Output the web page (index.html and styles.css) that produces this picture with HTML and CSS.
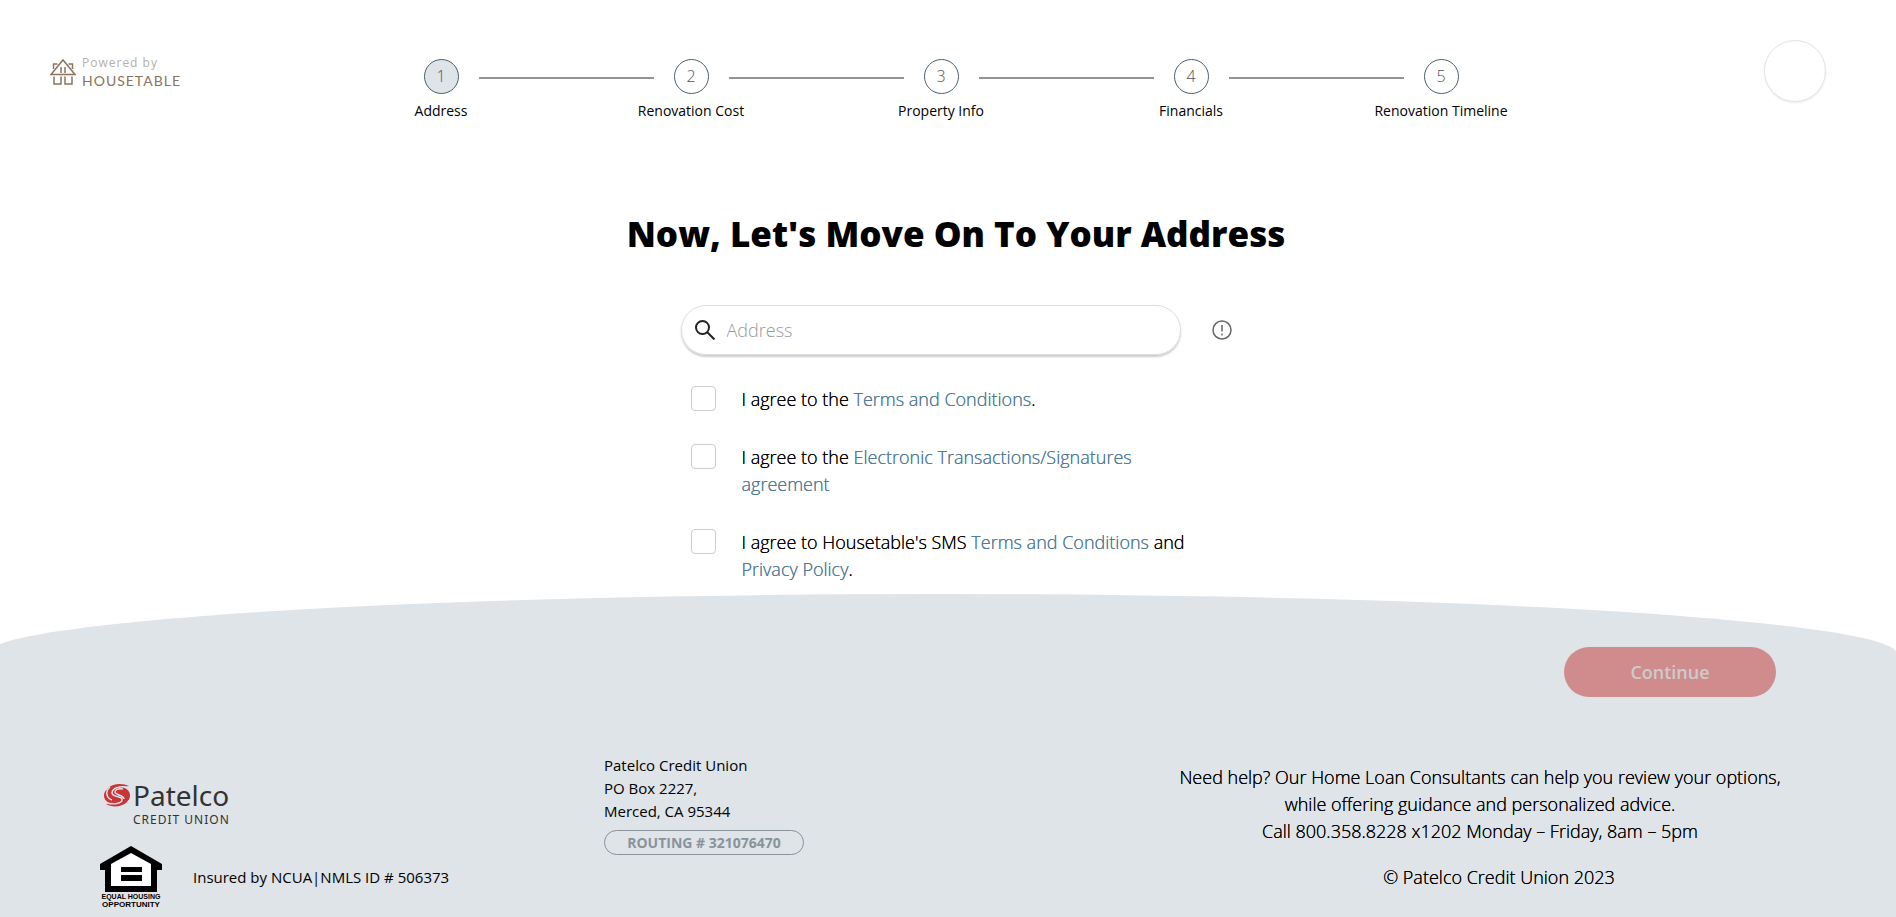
FILE: index.html
```
<!DOCTYPE html>
<html lang="en">
<head>
    <meta charset="UTF-8">
    <meta name="viewport" content="width=device-width, initial-scale=1.0">
    <title>Address</title>
    <link rel="stylesheet" href="styles.css">
</head>
<body>
    <!-- Header -->
    <header class="header">
        <a href="#" class="brand" aria-label="Powered by Housetable">
            <svg class="brand-icon" viewBox="0 0 26 28" fill="none" stroke="#8a735f" stroke-width="1.5">
                <path d="M1 16.500 13 2 25 16.500Z"/>
                <path d="M3.500 11V6h4M22.500 11V6h-4M11 9v6M15 9v6"/>
                <path d="M4 18.500V26h7v-7.500M15 18.500V26h7v-7.500"/>
            </svg>
            <span class="brand-text">
                <span class="brand-powered">Powered by</span>
                <span class="brand-name">HOUSETABLE</span>
            </span>
        </a>

        <ol class="steps">
            <li class="step active"><span class="step-number">1</span><span class="step-label">Address</span></li>
            <li class="step"><span class="step-number">2</span><span class="step-label">Renovation Cost</span></li>
            <li class="step"><span class="step-number">3</span><span class="step-label">Property Info</span></li>
            <li class="step"><span class="step-number">4</span><span class="step-label">Financials</span></li>
            <li class="step"><span class="step-number">5</span><span class="step-label">Renovation Timeline</span></li>
        </ol>

        <button type="button" class="profile" aria-label="Profile"></button>
    </header>

    <!-- Address form -->
    <main class="main">
        <h1>Now, Let's Move On To Your Address</h1>
        <form class="address-form" id="address-form">
            <div class="search-row">
                <label class="search">
                    <svg viewBox="0 0 20 20" fill="none" stroke="#222" stroke-width="2">
                        <circle cx="7.500" cy="7.500" r="6.500"/>
                        <path d="m12 12 7.500 7.500"/>
                    </svg>
                    <input type="text" name="address" placeholder="Address" aria-label="Address">
                </label>
                <button type="button" class="info" aria-label="Address help">
                    <svg viewBox="0 0 20 20" fill="none" stroke="#666" stroke-width="1.500">
                        <circle cx="10" cy="10" r="9"/>
                        <path d="M10 5v6.500M10 13.500v2"/>
                    </svg>
                </button>
            </div>

            <div class="agree">
                <input type="checkbox" id="terms">
                <label for="terms">I agree to the <a href="#">Terms and Conditions</a>.</label>
            </div>
            <div class="agree">
                <input type="checkbox" id="electronic">
                <label for="electronic">I agree to the <a href="#">Electronic Transactions/Signatures agreement</a></label>
            </div>
            <div class="agree">
                <input type="checkbox" id="sms">
                <label for="sms">I agree to Housetable's SMS <a href="#">Terms and Conditions</a> and <a href="#">Privacy Policy</a>.</label>
            </div>
        </form>
    </main>

    <!-- Footer -->
    <footer class="footer">
        <div class="actions">
            <button type="submit" form="address-form" class="continue" disabled>Continue</button>
        </div>

        <div class="footer-columns">
            <div class="footer-brand">
                <div class="patelco">
                    <svg class="patelco-icon" viewBox="0 0 28 24">
                        <ellipse cx="14" cy="12.500" rx="13" ry="9.500" fill="#c83437"/>
                        <path fill="#c83437" d="M26 3C20 0 10 0 5 5L3 10l8-4Z"/>
                        <path fill="#c83437" d="M3 21c6 4 16 3 21-2l2-7-8 7Z"/>
                        <g fill="none" stroke="#dfe4e8" stroke-width="1.500">
                            <path d="M26 5C18 2 9 5 9 10c0 4 9 3 10 6 1 4-7 6-15 4"/>
                            <path d="M20 6c-5-1-8 1-8 3 0 3 9 3 9 7"/>
                            <path d="M7 4C2 8 3 15 9 17"/>
                        </g>
                    </svg>
                    <div class="patelco-text">
                        <span class="patelco-name">Patelco</span>
                        <span class="patelco-sub">CREDIT UNION</span>
                    </div>
                </div>
                <div class="insured">
                    <div class="housing">
                        <svg viewBox="0 0 62 46">
                            <path d="M31 0 0 18v6h5v22h52V24h5v-6Z"/>
                            <path fill="#fff" d="M31 7 11 18v22h40V18Z"/>
                            <path d="M21 21h21v5H21zM21 29h21v6H21z"/>
                        </svg>
                        <span class="housing-equal">EQUAL HOUSING</span>
                        <span class="housing-opportunity">OPPORTUNITY</span>
                    </div>
                    <span>Insured by NCUA|NMLS ID # 506373</span>
                </div>
            </div>

            <div class="footer-address">
                <address>Patelco Credit Union<br>PO Box 2227,<br>Merced, CA 95344</address>
                <span class="routing">ROUTING # 321076470</span>
            </div>

            <div class="footer-help">
                <p>Need help? Our Home Loan Consultants can help you review your options,<br>while offering guidance and personalized advice.<br>Call 800.358.8228 x1202 Monday – Friday, 8am – 5pm</p>
                <p class="copyright">© Patelco Credit Union 2023</p>
            </div>
        </div>
    </footer>
</body>
</html>
```
FILE: styles.css
```
* {
    box-sizing: border-box;
}

body {
    margin: 0;
    min-height: 100vh;
    display: flex;
    flex-direction: column;
    font-family: "Open Sans", sans-serif;
    font-size: 18px;
    font-weight: 300;
    line-height: 27px;
    color: #000;
    background-color: #fff;
}

a {
    color: #4f7c9a;
    text-decoration: none;
}

/* Header */
.header {
    display: flex;
    align-items: flex-start;
    padding: 40px 70px 0 50px;
}

.brand {
    display: flex;
    align-items: center;
    gap: 6px;
    width: 266px;
    padding-top: 14px;
}

.brand-icon {
    width: 26px;
    height: 28px;
}

.brand-text {
    display: flex;
    flex-direction: column;
    line-height: 18px;
}

.brand-powered {
    font-size: 12px;
    font-weight: 400;
    letter-spacing: 1px;
    color: #b5b0ab;
}

.brand-name {
    font-family: Lato, sans-serif;
    font-size: 14px;
    font-weight: 400;
    letter-spacing: 1px;
    color: #8a735f;
}

.steps {
    display: flex;
    flex: 0 1 1250px;
    margin: 0 auto 0 0;
    padding: 19px 0 0;
    list-style: none;
}

.step {
    position: relative;
    flex: 1;
    display: flex;
    flex-direction: column;
    align-items: center;
    gap: 3px;
}

/* Line between two steps */
.step:not(:last-child)::after {
    content: "";
    position: absolute;
    top: 18px;
    left: calc(50% + 38px);
    right: calc(-50% + 37px);
    height: 2px;
    background-color: #939393;
}

.step-number {
    display: flex;
    justify-content: center;
    align-items: center;
    width: 35px;
    height: 35px;
    border: 1px solid #49616d;
    border-radius: 50%;
    font-size: 16px;
    color: #555;
}

.step.active .step-number {
    background-color: #dfe4e9;
}

.step-label {
    font-size: 14px;
    font-weight: 400;
}

.profile {
    width: 62px;
    height: 62px;
    padding: 0;
    border: 1px solid #e4e4e4;
    border-radius: 50%;
    background-color: #fff;
    box-shadow: 0 1px 2px rgba(0, 0, 0, 0.08);
}

/* Address form */
.main {
    display: flex;
    flex-direction: column;
    align-items: center;
    padding: 85px 0 11px 16px;
}

h1 {
    margin: 0 0 46px;
    font-size: 35px;
    font-weight: 800;
    line-height: 50px;
}

.address-form {
    display: flex;
    flex-direction: column;
    gap: 31px;
    width: 551px;
}

.search-row {
    display: flex;
    align-items: center;
    justify-content: space-between;
}

.search {
    display: flex;
    align-items: center;
    gap: 12px;
    width: 500px;
    height: 50px;
    padding: 0 13px;
    border: 1px solid #ddd;
    border-radius: 25px;
    box-shadow: 0 2px 2px rgba(0, 0, 0, 0.2);
}

.search svg {
    width: 20px;
    height: 20px;
}

.search input {
    flex: 1;
    padding: 0;
    border: none;
    outline: none;
    font: inherit;
    background: none;
}

.search input::placeholder {
    color: #999;
}

.info {
    width: 20px;
    height: 20px;
    padding: 0;
    border: none;
    background: none;
}

.info svg {
    display: block;
}

.agree {
    display: flex;
    align-items: flex-start;
    gap: 26px;
    padding-left: 10px;
}

.agree input {
    appearance: none;
    flex: none;
    width: 25px;
    height: 25px;
    margin: 0;
    border: 1px solid #ccc;
    border-radius: 4px;
    background-color: #fff;
}

.agree label {
    width: 450px;
}

/* Light weight needs a bit more contrast */
.agree label,
.footer-help {
    text-shadow: 0 0 0 currentColor;
}

/* Footer */
.footer {
    position: relative;
    flex: 1;
    overflow: hidden;
    padding: 53px 100px 4px;
}

/* Curved background */
.footer::before {
    content: "";
    position: absolute;
    z-index: -1;
    inset: 0 -1px 0 -13px;
    border-radius: 50% 50% 0 0 / 60px 60px 0 0;
    background-color: #dfe4e8;
}

.actions {
    display: flex;
    justify-content: flex-end;
    padding-right: 20px;
}

.continue {
    width: 212px;
    height: 50px;
    border: none;
    border-radius: 25px;
    font: inherit;
    font-weight: 600;
    color: #ccc;
    background-color: #d08b8d;
}

.footer-columns {
    display: grid;
    grid-template-columns: 504px 1fr 632px;
    margin-top: 57px;
}

.patelco {
    display: flex;
    gap: 2px;
    padding: 29px 0 0 3px;
}

.patelco-icon {
    width: 28px;
    height: 24px;
}

.patelco-text {
    display: flex;
    flex-direction: column;
    font-family: "Noto Sans", sans-serif;
    font-weight: 400;
    color: #333;
}

.patelco-name {
    font-size: 28px;
    line-height: 24px;
}

.patelco-sub {
    font-size: 12px;
    line-height: 26px;
    letter-spacing: 1px;
}

.insured {
    display: flex;
    align-items: center;
    gap: 31px;
    margin-top: 13px;
    font-size: 15px;
    font-weight: 400;
}

.housing {
    display: flex;
    flex-direction: column;
    align-items: center;
    width: 62px;
    font-family: "Liberation Sans", sans-serif;
    font-weight: bold;
    line-height: 8px;
    white-space: nowrap;
}

.housing svg {
    width: 62px;
    height: 46px;
    margin-bottom: 1px;
}

.housing-equal {
    font-size: 7px;
}

.housing-opportunity {
    font-size: 8px;
}

.footer-address {
    font-size: 15px;
    font-weight: 400;
    line-height: 23px;
}

.footer-address address {
    font-style: normal;
}

.routing {
    display: flex;
    justify-content: center;
    align-items: center;
    width: 200px;
    height: 25px;
    margin-top: 7px;
    border: 1px solid #89939a;
    border-radius: 13px;
    font-size: 14px;
    font-weight: 700;
    color: #89939a;
}

.footer-help {
    padding-top: 10px;
    text-align: center;
}

.footer-help p {
    margin: 0;
}

.footer-help .copyright {
    margin-top: 19px;
    padding-left: 38px;
}
```
